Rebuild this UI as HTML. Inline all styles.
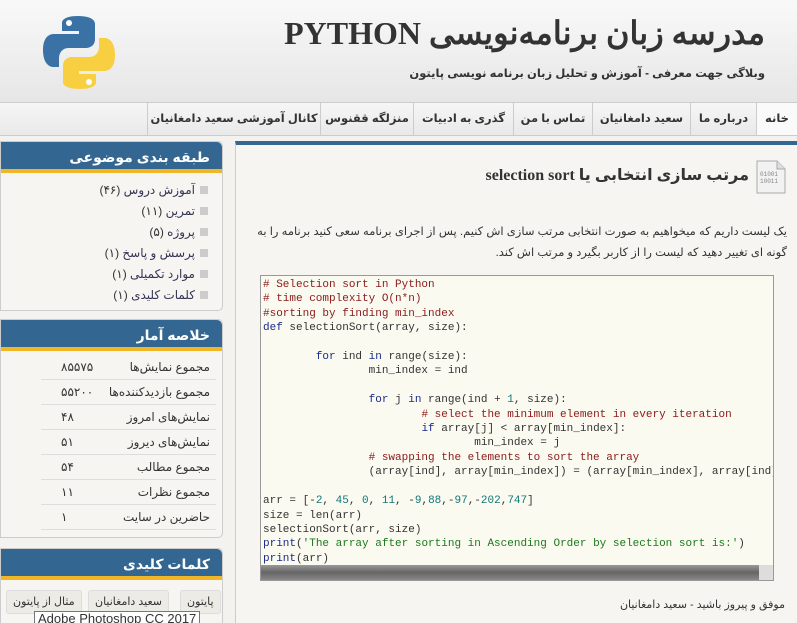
<!DOCTYPE html>
<html><head><meta charset="utf-8"><style>
*{margin:0;padding:0;box-sizing:border-box}
html,body{width:797px;height:623px;overflow:hidden}
body{background:#f3f2ee;font-family:"Liberation Sans","DejaVu Sans",sans-serif;position:relative}
.hdr{position:absolute;left:0;top:0;width:797px;height:103px;background:linear-gradient(#f9f9f9,#e6e6e6)}
.t1{position:absolute;right:32px;top:14px;font-family:"Liberation Serif","DejaVu Serif",serif;font-weight:bold;font-size:32px;color:#333;direction:rtl;white-space:nowrap}
.t2{position:absolute;right:32px;top:66px;font-size:11.5px;color:#333;direction:rtl;font-weight:bold;white-space:nowrap}
.nav{position:absolute;left:0;top:102px;width:797px;height:34px;background:linear-gradient(#f6f6f6,#e9e9e9);border-top:1px solid #ccc;border-bottom:1px solid #ccc}
.nav div{position:absolute;top:0;height:32px;line-height:32px;font-size:11.5px;font-weight:bold;color:#333;text-align:center;border-left:1px solid #ccc;direction:rtl;white-space:nowrap;overflow:hidden}
.panel{position:absolute;left:0;width:223px;background:#f6f5f1;border:1px solid #ccc;border-radius:0 5px 5px 0}
.ph{height:31px;background:#336690;color:#fff;font-weight:bold;font-size:14px;line-height:30px;padding-right:12px;text-align:right;border-bottom:4px solid #f0b624;border-radius:0 5px 0 0;direction:rtl}
.cat{direction:rtl;text-align:right;font-size:12px;color:#335;line-height:21px;padding-right:14px;padding-top:7px}
.cat span{display:inline-block;width:8px;height:8px;background:#ccc;margin-left:5px}
.cat b{font-weight:normal;color:#333}
.st{direction:rtl;font-size:12px;color:#333}
.st div{height:25px;line-height:25px;border-bottom:1px solid #ddd;margin:0 6px 0 40px;position:relative;padding-right:6px}
.st div i{position:absolute;left:20px;font-style:normal}
.main{position:absolute;left:235px;top:141px;width:562px;height:490px;background:#f6f5f1;border-top:4px solid #336690;border-left:1px solid #ccc}
.code{position:absolute;left:260px;top:275px;width:514px;height:306px;background:#fbfaf0;border:1px solid #999;overflow:hidden}
pre{font-family:"Liberation Mono",monospace;font-size:11px;line-height:14.4px;color:#333;padding:2px 0 0 2px;white-space:pre}
.c{color:#8b1a1a}.k{color:#1a2a8a}.n{color:#177}.s{color:#1a7a1a}
.sb{position:absolute;left:0;bottom:0;width:512px;height:15px;background:linear-gradient(#999,#666 50%,#888)}
.sb2{position:absolute;right:0;bottom:0;width:14px;height:15px;background:#ddd}
.tag{position:absolute;top:590px;height:24px;border:1px solid #ddd;border-radius:3px;background:#ecebe6;font-size:11px;line-height:22px;padding:0 6px;color:#333;direction:rtl}
</style></head><body>
<div class="hdr">
<svg style="position:absolute;left:43px;top:15px" width="72" height="75" viewBox="0 0 72 75">
<path d="M35 1C18 1 19 8 19 8v8h17v3H11S0 18 0 35s10 17 10 17h6v-9s0-10 10-10h17s9 0 9-9V9S53 1 35 1z" fill="#3a72a6"/>
<circle cx="26" cy="8" r="3" fill="#fff"/>
<path d="M37 74c17 0 16-7 16-7v-8H36v-3h25s11 1 11-16-10-17-10-17h-6v9s0 10-10 10H29s-9 0-9 9v16s-1 7 17 7z" fill="#f8cf40"/>
<circle cx="46" cy="67" r="3" fill="#fff"/>
</svg>
<div class="t1">مدرسه زبان برنامه‌نویسی PYTHON</div>
<div class="t2">وبلاگی جهت معرفی - آموزش و تحلیل زبان برنامه نویسی پایتون</div>
</div>
<div class="nav">
<div style="left:756px;width:41px;background:#fafafa">خانه</div>
<div style="left:690px;width:66px">درباره ما</div>
<div style="left:592px;width:98px">سعید دامغانیان</div>
<div style="left:513px;width:79px">تماس با من</div>
<div style="left:413px;width:100px">گذری به ادبیات</div>
<div style="left:320px;width:93px">منزلگه ققنوس</div>
<div style="left:147px;width:173px">کانال آموزشی سعید دامغانیان</div>
</div>
<div class="panel" style="top:141px;height:170px"><div class="ph">طبقه بندی موضوعی</div>
<div class="cat">
<div><span></span>آموزش دروس <b>(۴۶)</b></div>
<div><span></span>تمرین <b>(۱۱)</b></div>
<div><span></span>پروژه <b>(۵)</b></div>
<div><span></span>پرسش و پاسخ <b>(۱)</b></div>
<div><span></span>موارد تکمیلی <b>(۱)</b></div>
<div><span></span>کلمات کلیدی <b>(۱)</b></div>
</div></div>
<div class="panel" style="top:319px;height:219px"><div class="ph">خلاصه آمار</div>
<div class="st" style="padding-top:4px">
<div>مجموع نمایش‌ها<i>۸۵۵۷۵</i></div>
<div>مجموع بازدیدکننده‌ها<i>۵۵۲۰۰</i></div>
<div>نمایش‌های امروز<i>۴۸</i></div>
<div>نمایش‌های دیروز<i>۵۱</i></div>
<div>مجموع مطالب<i>۵۴</i></div>
<div>مجموع نظرات<i>۱۱</i></div>
<div>حاضرین در سایت<i>۱</i></div>
</div></div>
<div class="panel" style="top:548px;height:90px"><div class="ph">کلمات کلیدی</div></div>
<div class="tag" style="left:180px">پایتون</div>
<div class="tag" style="left:88px">سعید دامغانیان</div>
<div class="tag" style="left:6px">مثال از پایتون</div>
<div style="position:absolute;left:34px;top:611px;height:14px;background:#fff;border:1px solid #777;font-size:13px;line-height:13px;padding:0 3px;color:#333">Adobe Photoshop CC 2017</div>
<div class="main"></div>
<svg style="position:absolute;left:756px;top:160px" width="30" height="34" viewBox="0 0 30 34"><path d="M1 1h20l8 8v24H1z" fill="#f2f2f2" stroke="#aaa"/><path d="M21 1v8h8" fill="#ddd" stroke="#aaa"/><text x="4" y="16" font-size="6" font-family="Liberation Mono" fill="#888">01001</text><text x="4" y="23" font-size="6" font-family="Liberation Mono" fill="#888">10011</text></svg>
<div style="position:absolute;right:48px;top:165px;font-size:16px;font-weight:bold;color:#333;direction:rtl;font-family:'Liberation Serif','DejaVu Sans',serif;white-space:nowrap">مرتب سازی انتخابی یا selection sort</div>
<div style="position:absolute;left:250px;width:537px;top:222px;font-size:11.5px;line-height:21px;color:#333;direction:rtl;text-align:right">یک لیست داریم که میخواهیم به صورت انتخابی مرتب سازی اش کنیم. پس از اجرای برنامه سعی کنید برنامه را به گونه ای تغییر دهید که لیست را از کاربر بگیرد و مرتب اش کند.</div>
<div class="code"><pre><span class="c"># Selection sort in Python
# time complexity O(n*n)
#sorting by finding min_index</span>
<span class="k">def</span> selectionSort(array, size):

        <span class="k">for</span> ind <span class="k">in</span> range(size):
                min_index = ind

                <span class="k">for</span> j <span class="k">in</span> range(ind + <span class="n">1</span>, size):
                        <span class="c"># select the minimum element in every iteration</span>
                        <span class="k">if</span> array[j] &lt; array[min_index]:
                                min_index = j
                <span class="c"># swapping the elements to sort the array</span>
                (array[ind], array[min_index]) = (array[min_index], array[ind])

arr = [-<span class="n">2</span>, <span class="n">45</span>, <span class="n">0</span>, <span class="n">11</span>, -<span class="n">9</span>,<span class="n">88</span>,-<span class="n">97</span>,-<span class="n">202</span>,<span class="n">747</span>]
size = len(arr)
selectionSort(arr, size)
<span class="k">print</span>(<span class="s">'The array after sorting in Ascending Order by selection sort is:'</span>)
<span class="k">print</span>(arr)</pre><div class="sb"></div><div class="sb2"></div></div>
<div style="position:absolute;right:12px;top:598px;font-size:11px;color:#333;direction:rtl">موفق و پیروز باشید - سعید دامغانیان</div>
</body></html>
